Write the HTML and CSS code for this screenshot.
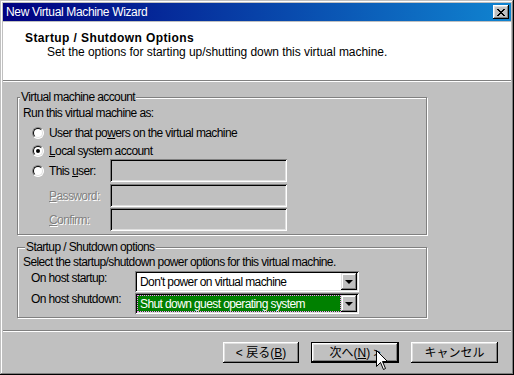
FILE: index.html
```html
<!DOCTYPE html>
<html lang="en">
<head>
<meta charset="utf-8">
<title>New Virtual Machine Wizard</title>
<link rel="stylesheet" href="styles.css">
</head>
<body>
<div class="window">
  <div class="titlebar">
    <span class="title">New Virtual Machine Wizard</span>
    <span class="close">
      <svg width="8" height="7" viewBox="0 0 8 7" shape-rendering="crispEdges">
        <path fill="#000" d="M0 0h2v1H0zM6 0h2v1H6zM1 1h2v1H1zM5 1h2v1H5zM2 2h4v1H2zM3 3h2v1H3zM2 4h4v1H2zM1 5h2v1H1zM5 5h2v1H5zM0 6h2v1H0zM6 6h2v1H6z"/>
      </svg>
    </span>
  </div>
  <div class="header">
    <div class="h-title">Startup / Shutdown Options</div>
    <div class="h-sub">Set the options for starting up/shutting down this virtual machine.</div>
  </div>
  <div class="hsep"></div>
  <div class="content">
    <div class="group g1">
      <span class="legend l1">Virtual machine account</span>
      <div class="line">Run this virtual machine as:</div>
      <div class="choices">
        <div class="row r1"><span class="radio"></span><span class="rlabel">User that po<u>w</u>ers on the virtual machine</span></div>
        <div class="row r2"><span class="radio checked"></span><span class="rlabel"><u>L</u>ocal system account</span></div>
        <div class="row frow"><span class="radio"></span><span class="flabel">This <u>u</u>ser:</span><span class="field"></span></div>
        <div class="row frow indent gap2"><span class="flabel disabled"><u>P</u>assword:</span><span class="field"></span></div>
        <div class="row frow indent gap1"><span class="flabel disabled"><u>C</u>onfirm:</span><span class="field"></span></div>
      </div>
    </div>
    <div class="group g2">
      <span class="legend l2">Startup / Shutdown options</span>
      <div class="line">Select the startup/shutdown power options for this virtual machine.</div>
      <div class="crow c1">
        <span class="clabel">On host startup:</span>
        <span class="combo"><span class="ctext">Don't power on virtual machine</span><span class="dd"><span class="tri"></span></span></span>
      </div>
      <div class="crow c2">
        <span class="clabel">On host shutdown:</span>
        <span class="combo"><span class="ctext sel">Shut down guest operating system</span><span class="dd"><span class="tri"></span></span></span>
      </div>
    </div>
  </div>
  <div class="footer">
    <div class="fsep"></div>
    <div class="buttons">
      <span class="btn back">&lt; 戻る(<u>B</u>)</span>
      <span class="btn next default">次へ(<u>N</u>) &gt;</span>
      <span class="btn cancel">キャンセル</span>
    </div>
  </div>
  <svg class="cursor" width="13" height="21" viewBox="0 0 13 21">
    <path d="M0.5 0.5 L0.5 16.5 L4.5 12.5 L7.5 19.5 L9.5 18.5 L6.5 11.5 L11.5 11.5 Z" fill="#fff" stroke="#000" stroke-width="1"/>
  </svg>
</div>
</body>
</html>
```
FILE: styles.css
```css
* { box-sizing: border-box; }
html, body { margin: 0; padding: 0; }
body {
  width: 514px;
  height: 375px;
  overflow: hidden;
  background: #c0c0c0;
  font-family: "Liberation Sans", "Noto Sans CJK JP", Arial, sans-serif;
  font-size: 12px;
  line-height: 14px;
  color: #000;
  letter-spacing: -0.6px;
}
u { text-decoration: underline; text-underline-offset: 1px; }

.window {
  position: relative;
  width: 514px;
  height: 375px;
  padding: 3px;
  background: #c0c0c0;
  display: flex;
  flex-direction: column;
  box-shadow: inset -1px -1px #000, inset 1px 1px #c0c0c0, inset -2px -2px #808080, inset 2px 2px #fff;
}

.titlebar {
  height: 18px;
  margin-bottom: 1px;
  flex: none;
  display: flex;
  align-items: center;
  justify-content: space-between;
  padding: 0 2px 0 3px;
  background: linear-gradient(to right, #000080, #1084d0);
  color: #fff;
  letter-spacing: -0.35px;
}
.close {
  width: 16px;
  height: 14px;
  display: flex;
  align-items: center;
  justify-content: center;
  background: #c0c0c0;
  box-shadow: inset -1px -1px #000, inset 1px 1px #fff, inset -2px -2px #808080, inset 2px 2px #dfdfdf;
}
.close svg { display: block; }

.header {
  height: 58px;
  flex: none;
  background: #fff;
  padding: 9px 0 0 22px;
}
.h-title { font-weight: bold; letter-spacing: 0.4px; }
.h-sub { padding-left: 22px; letter-spacing: -0.05px; }
.hsep, .fsep {
  height: 2px;
  flex: none;
  border-top: 1px solid #808080;
  border-bottom: 1px solid #fff;
}

.content {
  flex: 1;
  padding: 15px 0 0 14px;
}
.group {
  position: relative;
  width: 410px;
  border: 1px solid #808080;
  box-shadow: 1px 1px 0 #fff, inset 1px 1px 0 #fff;
  padding-left: 5px;
}
.g1 { height: 138px; padding-top: 8px; }
.g2 { height: 71px; padding-top: 7px; margin-top: 12px; }
.legend {
  position: absolute;
  top: -8px;
  padding: 0 1px;
  background: #c0c0c0;
  line-height: 14px;
}
.l1 { left: 2px; }
.l2 { left: 7px; }

.choices { margin-top: 4px; display: flex; flex-direction: column; }
.row { display: flex; align-items: center; padding-left: 9px; }
.r1 { height: 18px; }
.r2 { height: 17px; }
.frow { height: 23px; }
.indent { padding-left: 26px; }
.gap2 { margin-top: 2px; }
.gap1 { margin-top: 1px; }
.rlabel { margin-left: 5px; }
.radio + .flabel { margin-left: 5px; }
.flabel { width: 61px; flex: none; }
.disabled { color: #808080; text-shadow: 1px 1px 0 #fff; }

.radio {
  position: relative;
  flex: none;
  width: 12px;
  height: 12px;
  border-radius: 50%;
  border: 1px solid;
  border-color: #808080 #fff #fff #808080;
  background: #fff;
}
.radio::before {
  content: "";
  position: absolute;
  inset: 0;
  border-radius: 50%;
  border: 1px solid;
  border-color: #000 #dfdfdf #dfdfdf #000;
}
.radio.checked::after {
  content: "";
  position: absolute;
  left: 3px;
  top: 3px;
  width: 4px;
  height: 4px;
  border-radius: 50%;
  background: #000;
}

.field {
  width: 177px;
  height: 23px;
  flex: none;
  background: #c0c0c0;
  box-shadow: inset 1px 1px #808080, inset -1px -1px #fff, inset 2px 2px #000, inset -2px -2px #dfdfdf;
}

.crow { display: flex; align-items: flex-start; padding-left: 8px; }
.c1 { margin-top: 2px; }
.c2 { margin-top: 1px; }
.c2 .clabel { margin-top: -1px; }
.clabel { width: 104px; flex: none; }
.combo {
  width: 224px;
  height: 21px;
  flex: none;
  display: flex;
  padding: 2px;
  background: #fff;
  box-shadow: inset 1px 1px #808080, inset -1px -1px #fff, inset 2px 2px #000, inset -2px -2px #dfdfdf;
}
.ctext {
  flex: 1;
  padding: 2px 0 0 3px;
  white-space: nowrap;
  overflow: hidden;
}
.sel {
  background: #008000;
  color: #fff;
  outline: 1px dotted #ff80ff;
  outline-offset: -1px;
}
.dd {
  width: 16px;
  height: 17px;
  flex: none;
  display: flex;
  align-items: center;
  justify-content: center;
  background: #c0c0c0;
  box-shadow: inset -1px -1px #000, inset 1px 1px #dfdfdf, inset -2px -2px #808080, inset 2px 2px #fff;
}
.tri {
  width: 0;
  height: 0;
  border-left: 4px solid transparent;
  border-right: 4px solid transparent;
  border-top: 4px solid #000;
  margin: 1px 1px 0 0;
}

.footer { height: 42px; flex: none; display: flex; flex-direction: column; }
.buttons {
  display: flex;
  justify-content: flex-end;
  gap: 12px;
  padding: 10px 13px 0 0;
}
.btn {
  height: 21px;
  display: flex;
  align-items: center;
  justify-content: center;
  background: #c0c0c0;
  letter-spacing: 0;
  box-shadow: inset -1px -1px #000, inset 1px 1px #fff, inset -2px -2px #808080, inset 2px 2px #dfdfdf;
}
.back { width: 76px; }
.next { width: 88px; }
.cancel { width: 87px; }
.default {
  border: 1px solid #000;
}

.cursor {
  position: absolute;
  left: 376px;
  top: 350px;
}
```
